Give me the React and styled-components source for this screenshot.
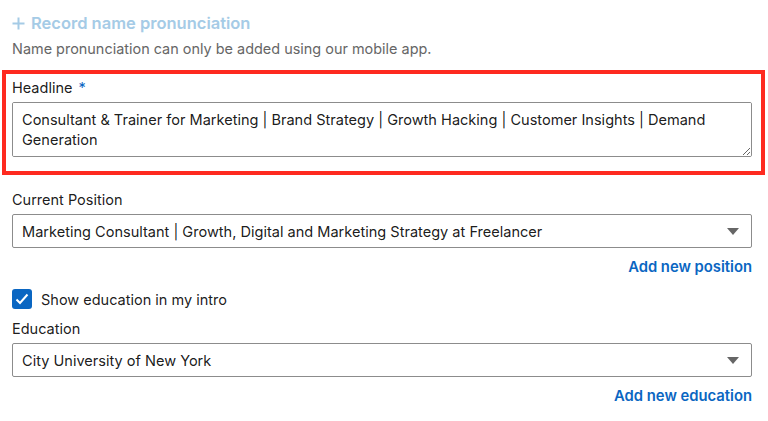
import React from "react";
import styled, { createGlobalStyle } from "styled-components";

const Global = createGlobalStyle`
  html, body { margin: 0; padding: 0; background: #fff; }
  body { font-family: Inter, "Noto Sans", "Liberation Sans", sans-serif; color: rgba(0,0,0,0.9); }
  * { box-sizing: border-box; }
`;

const Page = styled.div`
  width: 768px;
  height: 421px;
  overflow: hidden;
  padding: 11px 16px 0 12px;
  display: flex;
  flex-direction: column;
`;

const RecordLink = styled.div`
  display: flex;
  align-items: center;
  gap: 6px;
  height: 24px;
  color: #a5cbe6;
  font-size: 16.5px;
  font-weight: 600;
`;

const Hint = styled.div`
  margin-top: 4px;
  font-size: 14.45px;
  line-height: 20px;
  color: #666;
`;

const Highlight = styled.div`
  margin: 11px -13px 0 -10px;
  border: 4px solid #fe2a20;
  padding: 4px 9px 14px 6px;
  display: flex;
  flex-direction: column;
`;

const Field = styled.div`
  display: flex;
  flex-direction: column;
  gap: 4px;
  margin-top: ${(p) => p.$top || 0}px;
`;

const Label = styled.label`
  font-size: 14.5px;
  line-height: 20px;
  color: rgba(0,0,0,0.9);
`;

const Star = styled.span`
  color: #0a66c2;
  margin-left: 6px;
`;

const TextArea = styled.textarea`
  width: 100%;
  height: 55px;
  padding: 7px 9px;
  border: 1px solid #8c8c8c;
  border-radius: 2px;
  font-family: inherit;
  font-size: 14.55px;
  line-height: 20px;
  color: rgba(0,0,0,0.9);
  resize: vertical;
  outline: none;
`;

const Select = styled.div`
  height: 34px;
  border: 1px solid #8c8c8c;
  border-radius: 2px;
  display: flex;
  align-items: center;
  justify-content: space-between;
  padding: 2px 12px 0 9px;
  font-size: 14.55px;
  color: rgba(0,0,0,0.9);
`;

const CaretSvg = styled.svg`
  margin-top: -2px;
  flex-shrink: 0;
`;

const ActionLink = styled.a`
  align-self: flex-end;
  margin-top: ${(p) => p.$top || 0}px;
  font-size: 14.8px;
  line-height: 20px;
  font-weight: 600;
  color: #0a66c2;
  text-decoration: none;
`;

const CheckRow = styled.div`
  display: flex;
  align-items: center;
  gap: 9px;
  margin-top: 12px;
  height: 20px;
  font-size: 14.5px;
`;

const Box = styled.span`
  width: 20px;
  height: 20px;
  border-radius: 3px;
  background: #0a66c2;
  display: flex;
  align-items: center;
  justify-content: center;
`;

const Caret = () => (
  <CaretSvg width="12" height="7" viewBox="0 0 12 7">
    <path d="M0 0 H12 L6 7 Z" fill="#666" />
  </CaretSvg>
);

export default function App() {
  return (
    <>
      <Global />
      <Page>
        <RecordLink>
          <svg width="13" height="13" viewBox="0 0 13 13">
            <path d="M6.5 0.5 V12.5 M0.5 6.5 H12.5" stroke="#a5cbe6" strokeWidth="2" />
          </svg>
          Record name pronunciation
        </RecordLink>
        <Hint>Name pronunciation can only be added using our mobile app.</Hint>
        <Highlight>
          <Field>
            <Label>
              Headline<Star>*</Star>
            </Label>
            <TextArea
              defaultValue="Consultant & Trainer for Marketing | Brand Strategy | Growth Hacking | Customer Insights | Demand Generation"
            />
          </Field>
        </Highlight>
        <Field $top={15}>
          <Label>Current Position</Label>
          <Select>
            <span>Marketing Consultant | Growth, Digital and Marketing Strategy at Freelancer</span>
            <Caret />
          </Select>
        </Field>
        <ActionLink $top={9}>Add new position</ActionLink>
        <CheckRow>
          <Box>
            <svg width="14" height="12" viewBox="0 0 14 12">
              <path d="M1.5 6.5 L5 10 L12.5 1.5" fill="none" stroke="#fff" strokeWidth="2" />
            </svg>
          </Box>
          Show education in my intro
        </CheckRow>
        <Field $top={10}>
          <Label>Education</Label>
          <Select>
            <span>City University of New York</span>
            <Caret />
          </Select>
        </Field>
        <ActionLink $top={9}>Add new education</ActionLink>
      </Page>
    </>
  );
}
